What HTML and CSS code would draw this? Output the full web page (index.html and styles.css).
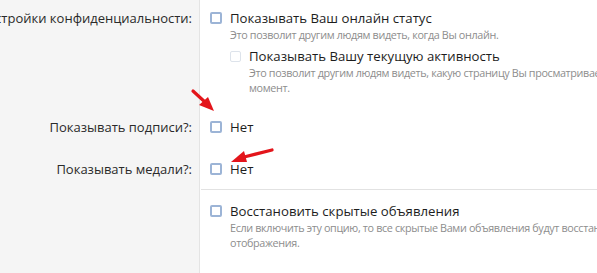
FILE: index.html
```html
<!DOCTYPE html>
<html lang="ru">
<head>
<meta charset="utf-8">
<title>Настройки конфиденциальности</title>
<link rel="stylesheet" href="styles.css">
</head>
<body>
<div class="page">
  <div class="form">
    <div class="row first">
      <div class="label">Настройки конфиденциальности:</div>
      <div class="field">
        <div class="option">
          <span class="box"></span>
          <div class="opt-body">
            <div class="opt-title">Показывать Ваш онлайн статус</div>
            <div class="hint">Это позволит другим людям видеть, когда Вы онлайн.</div>
          </div>
        </div>
        <div class="option nested">
          <span class="box disabled"></span>
          <div class="opt-body">
            <div class="opt-title">Показывать Вашу текущую активность</div>
            <div class="hint">Это позволит другим людям видеть, какую страницу Вы просматриваете в данный момент.</div>
          </div>
        </div>
      </div>
    </div>
    <div class="row compact">
      <div class="label">Показывать подписи?:</div>
      <div class="field">
        <div class="option">
          <span class="box"></span>
          <div class="opt-body"><div class="opt-title">Нет</div></div>
        </div>
      </div>
    </div>
    <div class="row compact last-compact">
      <div class="label">Показывать медали?:</div>
      <div class="field">
        <div class="option">
          <span class="box"></span>
          <div class="opt-body"><div class="opt-title">Нет</div></div>
        </div>
      </div>
    </div>
    <div class="row separated">
      <div class="label"></div>
      <div class="field">
        <div class="option">
          <span class="box"></span>
          <div class="opt-body">
            <div class="opt-title">Восстановить скрытые объявления</div>
            <div class="hint">Если включить эту опцию, то все скрытые Вами объявления будут восстановлены для отображения.</div>
          </div>
        </div>
      </div>
    </div>
  </div>
  <svg class="arrows" width="597" height="273" viewBox="0 0 597 273" aria-hidden="true">
    <line x1="193" y1="91" x2="206" y2="103" stroke="#e3151b" stroke-width="3.2" stroke-linecap="round"/>
    <polygon points="214,111 199,105 208,97" fill="#e3151b"/>
    <line x1="272" y1="150" x2="244" y2="157" stroke="#e3151b" stroke-width="3.2" stroke-linecap="round"/>
    <polygon points="231,162 244,151 247,162" fill="#e3151b"/>
  </svg>
</div>
</body>
</html>
```
FILE: styles.css
```css
html, body {
  margin: 0;
  padding: 0;
  background: #ffffff;
  overflow: hidden;
}
body {
  width: 597px;
  height: 273px;
  font-family: "Open Sans", "Noto Sans", sans-serif;
  color: #1d1d1d;
}
.page {
  position: relative;
  width: 597px;
  height: 273px;
  overflow: hidden;
}
.form {
  margin-left: -40px;
  width: 740px;
  height: 273px;
  display: flex;
  flex-direction: column;
  background: linear-gradient(to right, #f5f5f5 0, #f5f5f5 239px, #e4e4e4 239px, #e4e4e4 240px, #ffffff 240px);
}
.row {
  display: flex;
}
.row.separated {
  flex: 1;
}
.label {
  width: 232px;
  flex: none;
  padding: 9px 8px 10px 0;
  text-align: right;
  font-size: 13px;
  line-height: 18px;
  color: #2a2a2a;
  white-space: nowrap;
}
.field {
  flex: 1;
  padding: 9px 10px 10px 9px;
  margin-left: 1px;
}
.row.first .label,
.row.first .field {
  padding-bottom: 11px;
}
.row.compact .label,
.row.compact .field {
  padding-top: 12px;
  padding-bottom: 12px;
}
.row.last-compact .label,
.row.last-compact .field {
  padding-bottom: 11px;
}
.row.separated .field {
  border-top: 1px solid #e2e2e2;
  padding-top: 12px;
}
.row.separated .label {
  padding-top: 13px;
}
.option {
  display: flex;
  gap: 8px;
}
.option.nested {
  margin-top: 5px;
  margin-left: 20px;
}
.box {
  flex: none;
  width: 12px;
  height: 12px;
  margin-top: 3px;
  box-sizing: border-box;
  border: 2px solid #9cb4d6;
  border-radius: 2px;
  background: #ffffff;
}
.box.disabled {
  width: 11px;
  height: 11px;
  margin-top: 4px;
  border: 1px solid #dde3eb;
}
.opt-body {
  flex: 1;
  min-width: 0;
}
.opt-title {
  font-size: 13.2px;
  line-height: 18px;
  color: #1d1d1d;
}
.hint {
  font-size: 10.8px;
  letter-spacing: -0.35px;
  line-height: 15px;
  color: #8d8d8d;
  text-wrap: wrap;
}
.arrows {
  position: absolute;
  left: 0;
  top: 0;
  pointer-events: none;
}
```
